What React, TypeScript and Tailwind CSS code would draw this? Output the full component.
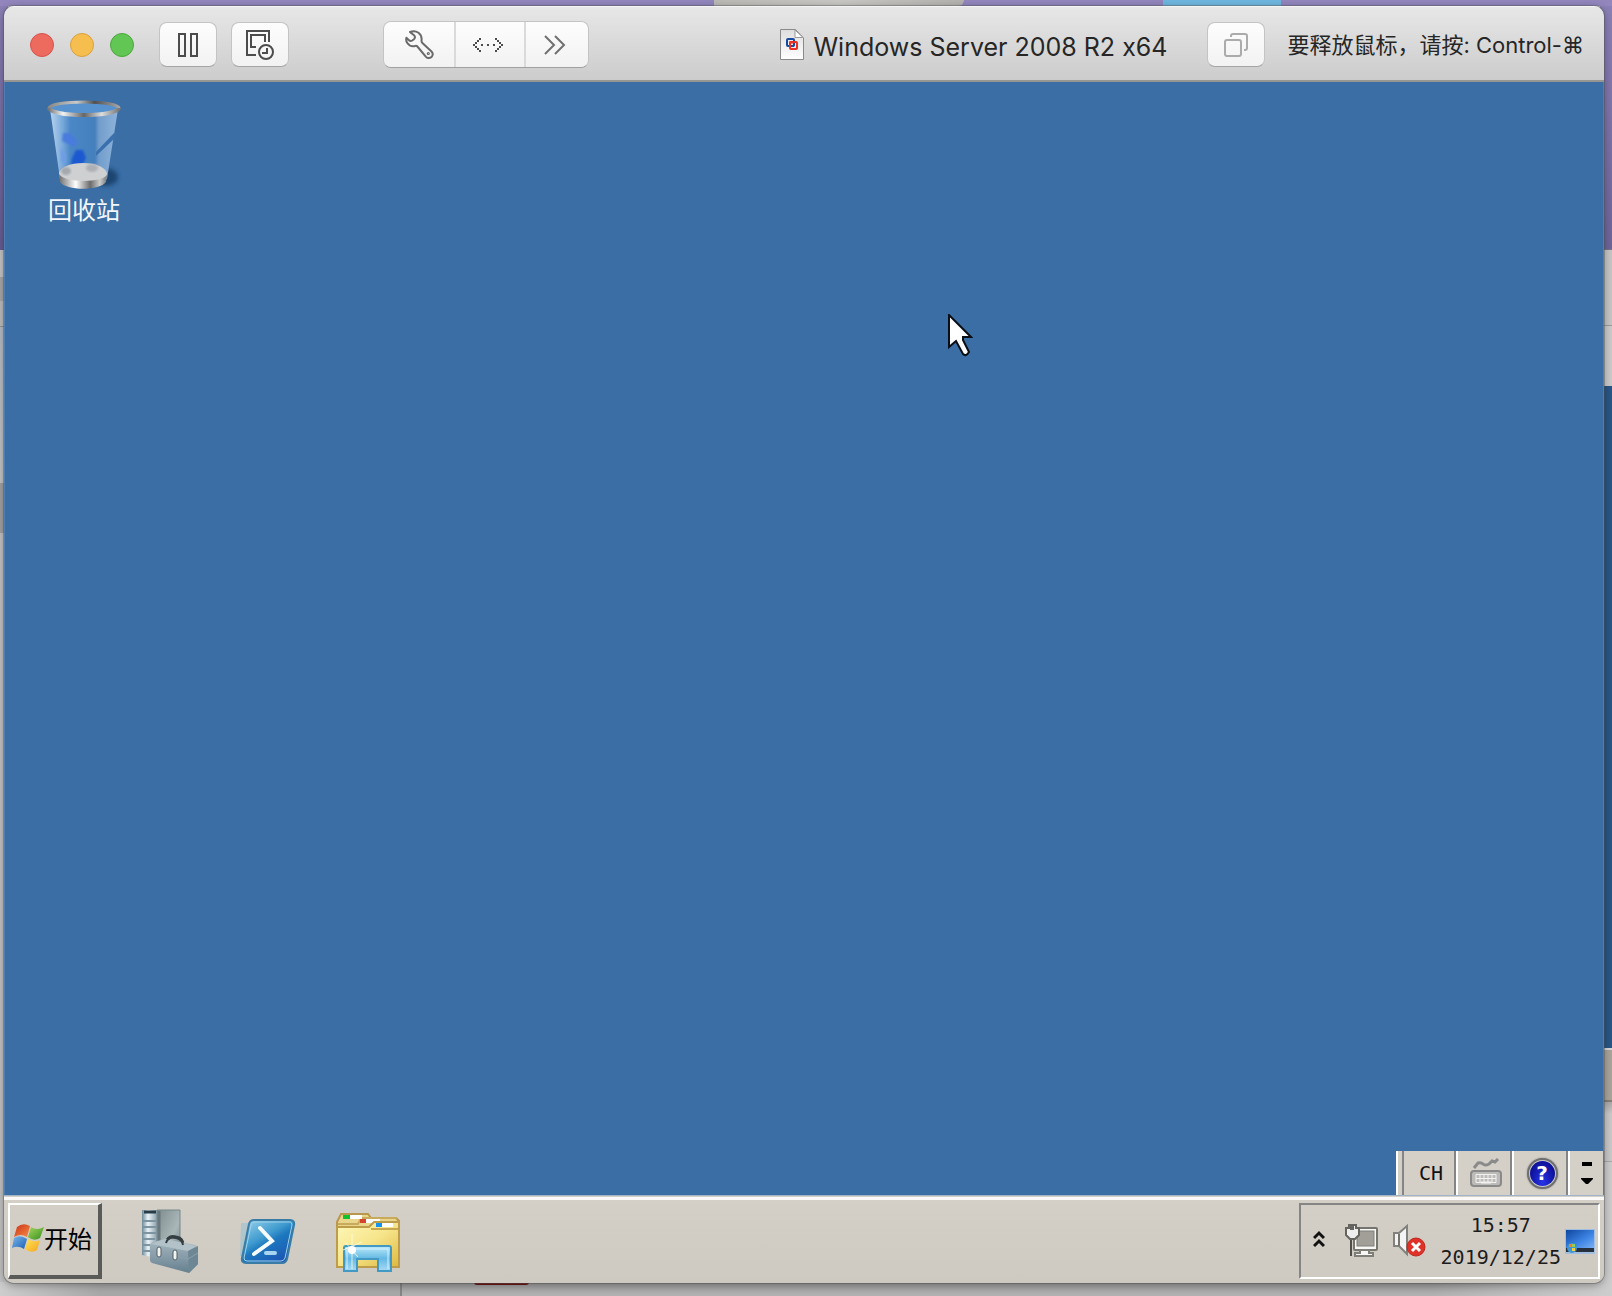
import React from "react";

const CJK = "font-[Inter,'Noto_Sans_CJK_SC',sans-serif]";
const TOOL =
  "flex h-[45px] items-center justify-center bg-linear-to-b from-[#fdfdfd] to-[#f2f2f2]";
const SINGLE =
  "w-[58px] shrink-0 rounded-lg border border-[#c4c4c4] border-b-[#a5a5a5]";

function Backdrop() {
  return (
    <div aria-hidden="true" className="absolute inset-0 flex flex-col bg-[#c9c9c9]">
      <div className="flex h-[6px] bg-[#9286bd]">
        <div className="ml-[714px] h-full w-[250px] rounded-br-full bg-linear-to-r from-[#bcbab5] via-[#c9c8c5] to-[#b5b3b0]" />
        <div className="ml-[199px] h-full w-[118px] bg-[#6fb7df]" />
      </div>
      <div className="flex flex-1 justify-between">
        <div className="flex w-2 flex-col">
          <div className="h-[244px] bg-linear-to-b from-[#8b80b5] to-[#665b93]" />
          <div className="h-[27px] bg-[#c4c4c4]" />
          <div className="h-6 bg-[#a8a8a8]" />
          <div className="h-[26px] border-b border-[#959595] bg-[#bdbdbd]" />
          <div className="h-[156px] bg-linear-to-b from-[#b5bcc4] to-[#c4c4c4]" />
          <div className="h-[50px] bg-[#a2a2a2]" />
          <div className="flex-1 bg-[#c2c2c2]" />
        </div>
        <div className="flex w-3 flex-col">
          <div className="h-[243px] bg-linear-to-b from-[#8b80b5] to-[#6d659a]" />
          <div className="h-[77px] border-t border-b border-t-[#77758a] border-b-[#9c9c9c] bg-[#c6c6c6]" />
          <div className="h-[60px] bg-[#cbcbcb]" />
          <div className="h-[662px] bg-[#295686]" />
          <div className="h-[54px] border-t-2 border-b-2 border-t-[#d9d9d9] border-b-[#858179] bg-[#aaa59c]" />
          <div className="h-[60px] border-b border-[#a9a9a9] bg-linear-to-b from-[#a9a9a9] via-[#cacaca] via-20% to-[#c9c9c9]" />
          <div className="flex-1 bg-[#cdcdcd]" />
        </div>
      </div>
      <div className="flex h-[14px] bg-linear-to-b from-[#9c9c9c] to-[#b3b3b3]">
        <div className="w-[402px] border-r-2 border-[#858585] bg-linear-to-r from-[#cdcdcd] to-[#a8a8a8] to-25%" />
        <div className="ml-[72px] h-[3px] w-[55px] rounded-b-full bg-[#701716]" />
        <div className="ml-auto w-[180px] bg-linear-to-r from-transparent to-[#cdcdcd]" />
      </div>
    </div>
  );
}

function PauseIcon() {
  return (
    <svg width="20" height="24" viewBox="0 0 20 24" fill="none" stroke="#4c4c4c" strokeWidth="2">
      <path d="M1 1h6v22H1zM13 1h6v22h-6z" />
    </svg>
  );
}

function SnapshotIcon() {
  return (
    <svg width="28" height="30" viewBox="0 0 28 30" fill="none" stroke="#4c4c4c" strokeWidth="2">
      <path d="M10 25H1V1h22v11M10 17H5V5h14v7" />
      <circle cx="20" cy="22" r="7" />
      <path d="M21 18v5h-5" />
    </svg>
  );
}

function WrenchIcon() {
  return (
    <svg width="29" height="29" viewBox="0 0 29 29" fill="none" stroke="#6a6a6a" strokeWidth="2" strokeLinejoin="round">
      <path d="M5 2C8 .7 11 1 13.500 2.800C16 4.700 17 7.300 16.500 10.500C16.400 11.800 16.600 12.300 17.400 13L26.500 21.500C28 23 28 25 26.800 26.600C25.500 28.300 22.500 28.500 21 26.800L12.800 17C12 16 11.500 15.700 10.300 15.900C7 16.600 4 15.600 2.300 13C1.200 11.300.9 9.600 1.400 7.800L4 10.200C5 11.100 6 11.200 7.200 10.500L9 9.200C10 8.300 10.100 7 9.600 6C9 4.500 7 4 5 2Z" />
      <circle cx="23.300" cy="23.500" r=".6" />
    </svg>
  );
}

function NetworkArrowsIcon() {
  return (
    <svg width="30" height="14" viewBox="0 0 30 14" fill="#4c4c4c" shapeRendering="crispEdges">
      <path d="M0 6h2v2H0zM2 4h2v2H2zM4 2h2v2H4zM6 0h2v2H6zM2 8h2v2H2zM4 10h2v2H4zM6 12h2v2H6zM8 6h2v2H8zM14 6h2v2h-2zM20 6h2v2h-2zM28 6h2v2h-2zM26 4h2v2h-2zM24 2h2v2h-2zM22 0h2v2h-2zM26 8h2v2h-2zM24 10h2v2h-2zM22 12h2v2h-2z" />
    </svg>
  );
}

function DoubleChevronIcon() {
  return (
    <svg width="22" height="20" viewBox="0 0 22 20" fill="none" stroke="#707070" strokeWidth="2">
      <path d="M1 1l9 9-9 9M11 1l9 9-9 9" />
    </svg>
  );
}

function UnityIcon() {
  return (
    <svg width="24" height="24" viewBox="0 0 24 24" fill="none" stroke="#ababab" strokeWidth="2">
      <rect x="1" y="7" width="16" height="16" rx="2" />
      <path d="M7 4V3q0-2 2-2h12q2 0 2 2v12q0 2-2 2h-1" />
    </svg>
  );
}

function DocumentIcon() {
  return (
    <svg width="24" height="31" viewBox="0 0 24 31" fill="none">
      <defs>
        <linearGradient id="doc" x2="0" y2="1">
          <stop stopColor="#dedede" />
          <stop offset="1" stopColor="#fff" />
        </linearGradient>
      </defs>
      <path d="M.5.500H15.500L23.500 9V30.500H.5Z" fill="url(#doc)" stroke="#8a8a8a" />
      <path d="M15 1V8.500H23Z" fill="#fff" stroke="#9a9a9a" />
      <rect x="7" y="10" width="7" height="7" rx="1" stroke="#174a9c" strokeWidth="2" />
      <rect x="10" y="13" width="7" height="7" rx="1" stroke="#ee2f24" strokeWidth="2" />
      <path d="M14 14v3h-3" stroke="#174a9c" strokeWidth="1" />
      <path d="M9 13.500h4" stroke="#ee2f24" strokeWidth="2" />
    </svg>
  );
}

function TitleBar() {
  return (
    <header className="flex h-[76px] items-center border-t border-b-2 border-t-[#f6f6f6] border-b-[#989692] bg-linear-to-b from-[#e7e7e7] to-[#cccccc] pt-[2px] pr-5 pl-[26px]">
      <div className="flex gap-4">
        <button aria-label="关闭" className="size-6 rounded-full border border-[#d9514a] bg-[#ed6a5f]" />
        <button aria-label="最小化" className="size-6 rounded-full border border-[#d9a13d] bg-[#f6be4f]" />
        <button aria-label="缩放" className="size-6 rounded-full border border-[#4ca73c] bg-[#62c655]" />
      </div>
      <button aria-label="暂停" className={`ml-[25px] ${TOOL} ${SINGLE}`}>
        <PauseIcon />
      </button>
      <button aria-label="快照" className={`ml-[14px] ${TOOL} ${SINGLE}`}>
        <SnapshotIcon />
      </button>
      <div className="ml-[94px] flex shrink-0 overflow-hidden rounded-lg border border-[#c4c4c4] border-b-[#a0a0a0]">
        <button aria-label="设置" className={`w-[70px] ${TOOL}`}>
          <WrenchIcon />
        </button>
        <button aria-label="网络" className={`w-[70px] border-l-2 border-[#dadada] pr-1 ${TOOL}`}>
          <NetworkArrowsIcon />
        </button>
        <button aria-label="更多" className={`w-[64px] border-l-2 border-[#dadada] pr-1 ${TOOL}`}>
          <DoubleChevronIcon />
        </button>
      </div>
      <div className="ml-auto flex items-center gap-[9px] text-[#262626]">
        <DocumentIcon />
        <h1 className="mt-1 text-[25px] leading-8 whitespace-nowrap font-[Inter,sans-serif] [font-feature-settings:'calt'_0]">
          Windows Server 2008 R2 x64
        </h1>
      </div>
      <button aria-label="Unity" className={`ml-10 ${TOOL} ${SINGLE}`}>
        <UnityIcon />
      </button>
      <p className={`ml-[22px] text-[22px] leading-8 whitespace-nowrap text-[#262626] ${CJK}`}>
        要释放鼠标，请按: Control-⌘
      </p>
    </header>
  );
}

function RecycleBinIcon() {
  return (
    <svg width="76" height="92" viewBox="0 0 76 92" fill="none">
      <defs>
        <linearGradient id="rim">
          <stop stopColor="#777" />
          <stop offset=".2" stopColor="#f2f2f2" />
          <stop offset=".5" stopColor="#666" />
          <stop offset=".75" stopColor="#ddd" />
          <stop offset="1" stopColor="#777" />
        </linearGradient>
        <linearGradient id="rimBack">
          <stop stopColor="#8a8a8a" />
          <stop offset=".4" stopColor="#c9c9c9" />
          <stop offset=".65" stopColor="#505050" />
          <stop offset="1" stopColor="#a5a5a5" />
        </linearGradient>
        <linearGradient id="glass">
          <stop stopColor="#b8d3ee" />
          <stop offset=".18" stopColor="#79aadb" />
          <stop offset=".3" stopColor="#4a87c6" />
          <stop offset=".66" stopColor="#4580bd" />
          <stop offset=".72" stopColor="#729dcb" />
          <stop offset="1" stopColor="#8fb4dc" />
        </linearGradient>
        <linearGradient id="base">
          <stop stopColor="#6d6d6d" />
          <stop offset=".35" stopColor="#fff" />
          <stop offset=".65" stopColor="#6b6b6b" />
          <stop offset=".85" stopColor="#ccc" />
          <stop offset="1" stopColor="#777" />
        </linearGradient>
        <filter id="soft" x="-30%" y="-30%" width="160%" height="160%">
          <feGaussianBlur stdDeviation="2" />
        </filter>
        <filter id="blur1"><feGaussianBlur stdDeviation=".8" /></filter>
      </defs>
      <ellipse cx="60" cy="78" rx="12" ry="9" fill="#1f4471" filter="url(#soft)" />
      <path d="M4 10L14 80Q38 96 61 80L72 10Q38 22 4 10Z" fill="url(#glass)" />
      <path d="M50 53L68 34V40L50 57Z" fill="#3a70ad" />
      <g filter="url(#blur1)">
        <path d="M17 34L24 34L32 43L29 48L16 42Z" fill="#4a7bdc" />
        <path d="M30 51L37 51L40 59L36 67L25 66L26 59Z" fill="#1e58d0" />
        <path d="M15 48L20 56L20 65L15 62Z" fill="#6e9de6" />
      </g>
      <ellipse cx="37" cy="75" rx="24" ry="11" fill="#cfd0d2" />
      <ellipse cx="46" cy="69" rx="6" ry="4" fill="#adb0b5" filter="url(#blur1)" />
      <ellipse cx="20" cy="72" rx="5" ry="4" fill="#a5a9ad" filter="url(#blur1)" />
      <path d="M13 75C18 84 56 84 61 76L60 83C54 92 20 92 14 83Z" fill="url(#base)" />
      <ellipse cx="38" cy="9" rx="34" ry="6" fill="#5792cf" />
      <path d="M3 9A35 6 0 0 1 73 9" stroke="url(#rimBack)" strokeWidth="3" />
      <path d="M3 9A35 7 0 0 0 73 9" stroke="url(#rim)" strokeWidth="4" />
    </svg>
  );
}

function PointerIcon() {
  return (
    <svg width="25" height="43" viewBox="0 0 25 43">
      <path d="M1 1V33L8 27L15 40Q18 43 21 38L15 26V23H23Z" fill="#fff" stroke="#0a0f16" strokeWidth="2" />
    </svg>
  );
}

function KeyboardIcon() {
  return (
    <svg width="34" height="30" viewBox="0 0 34 30" fill="none" stroke="#8a8a8a">
      <rect x="2" y="13" width="30" height="15" rx="3" fill="#bdbbb8" strokeWidth="2" />
      <path d="M5 10L9 5Q12 4 14 6T20 6L23 3L26 4L29 1" strokeWidth="3" />
      <path d="M7 16.500h20v8h-20zM7 20.500h20M11 16v8M15 16v8M19 16v8M23 16v8" stroke="#f1f1f1" />
      <path d="M12 24.500h10" stroke="#f1f1f1" strokeWidth="2" />
    </svg>
  );
}

function HelpIcon() {
  return (
    <span className="flex size-[31px] items-center justify-center rounded-full border-2 border-[#6f6f6f] bg-[#c9c9c9] p-px shadow-[0_0_2px_#888]">
      <span className="flex size-full items-center justify-center rounded-full bg-radial-[at_50%_85%] from-[#2734e8] to-[#04047c] text-[20px] leading-5 font-bold text-white font-['DejaVu_Sans',sans-serif]">
        ?
      </span>
    </span>
  );
}

function LanguageBar() {
  const cell = "flex items-center justify-center border-l-2 border-white";
  return (
    <div className="flex h-[44px] bg-[#d4d0c8]">
      <div className="w-2 border-r-2 border-l-2 border-r-[#858585] border-l-white" />
      <button className="w-[50px] pl-1 text-[20px] text-[#111] font-['DejaVu_Sans_Mono',monospace]">CH</button>
      <div className="w-[2px] bg-[#858585]" />
      <button aria-label="键盘" className={`${cell} w-[54px] pl-1`}>
        <KeyboardIcon />
      </button>
      <div className="w-[2px] bg-[#858585]" />
      <button aria-label="帮助" className={`${cell} w-[54px] pl-1`}>
        <HelpIcon />
      </button>
      <div className="w-[2px] bg-[#858585]" />
      <button aria-label="选项" className={`${cell} w-[35px]`}>
        <svg width="12" height="24" viewBox="0 0 12 24">
          <path d="M1 1h10v4H1zM0 17h12v1l-5 5h-2l-5-5z" fill="#000" />
        </svg>
      </button>
    </div>
  );
}

function Desktop() {
  return (
    <main className="relative flex flex-1 flex-col items-start justify-between border-x border-[#4f7fb2] bg-[#3a6ea5]">
      <button className="mt-[17px] ml-[33px] flex w-[92px] flex-col items-center">
        <RecycleBinIcon />
        <span className="mt-1 text-[24px] leading-7 text-[#f2f6fa] font-['Noto_Sans_CJK_SC',sans-serif]">
          回收站
        </span>
      </button>
      <div className="absolute top-[232px] left-[943px]">
        <PointerIcon />
      </div>
      <div className="self-end">
        <LanguageBar />
      </div>
    </main>
  );
}

function WindowsFlag() {
  return (
    <svg width="32" height="30" viewBox="0 0 32 30">
      <defs>
        <linearGradient id="fr" x2="1" y2="1"><stop stopColor="#c93216" /><stop offset="1" stopColor="#f88b46" /></linearGradient>
        <linearGradient id="fg" x2="1" y2="1"><stop stopColor="#a6d65c" /><stop offset="1" stopColor="#348e20" /></linearGradient>
        <linearGradient id="fb" x2="1" y2="1"><stop stopColor="#7bb8ea" /><stop offset="1" stopColor="#1c5eb5" /></linearGradient>
        <linearGradient id="fy" x2="1" y2="1"><stop stopColor="#ffe35a" /><stop offset="1" stopColor="#f3a51d" /></linearGradient>
      </defs>
      <path d="M5 4Q11-1 18 3L15 14Q9 10 2 14Z" fill="url(#fr)" />
      <path d="M19 4Q25 8 32 4L28 15Q22 19 16 14Z" fill="url(#fg)" />
      <path d="M2 15Q8 11 15 16L12 26Q6 22 0 25Z" fill="url(#fb)" />
      <path d="M16 16Q22 20 28 17L25 27Q19 31 13 26Z" fill="url(#fy)" />
    </svg>
  );
}

function ServerManagerIcon() {
  return (
    <svg width="58" height="66" viewBox="0 0 58 66" fill="none">
      <defs>
        <linearGradient id="sv" x2="1" y2="1"><stop stopColor="#7f8b8d" /><stop offset=".6" stopColor="#aab7b8" /><stop offset="1" stopColor="#6f7f85" /></linearGradient>
        <linearGradient id="tb" x2="0" y2="1"><stop stopColor="#a9bac3" /><stop offset="1" stopColor="#66808f" /></linearGradient>
        <linearGradient id="sf"><stop stopColor="#6d8998" /><stop offset=".4" stopColor="#eaf3f8" /><stop offset="1" stopColor="#8ba0ab" /></linearGradient>
      </defs>
      <path d="M1 1H16V49L1 46Z" fill="url(#sf)" />
      <path d="M16 1H39V46L16 48Z" fill="url(#sv)" stroke="#76878b" />
      <path d="M18 2V46" stroke="#66777d" strokeWidth="3" />
      <path d="M3 3h12" stroke="#263c49" strokeWidth="3" />
      <path d="M2 12h13M2 18h13M2 24h13M1 30h13M1 36h8M1 42h8" stroke="#7c93a0" strokeWidth="2" />
      <path d="M25 34Q27 26 35 28Q42 29 42 36" stroke="#353f43" strokeWidth="3" />
      <path d="M9 36Q9 34 12 33L24 30L54 36Q57 37 57 40V55L48 64L11 54Q9 53 9 51Z" fill="url(#tb)" />
      <path d="M10 35L24 30L56 37L47 42Z" fill="#b3c1c8" />
      <path d="M47 42L57 37V55L48 64Z" fill="#6e8795" />
      <path d="M9 42L47 50L57 44" stroke="#8ca1ac" />
      <path d="M25 34Q27 27 35 29Q41 30 42 36" stroke="#353f43" strokeWidth="2" />
      <rect x="16" y="38" width="4" height="10" rx="2" fill="#f3f3ed" stroke="#506069" />
      <rect x="32" y="41" width="4" height="10" rx="2" fill="#f3f3ed" stroke="#506069" />
    </svg>
  );
}

function PowerShellIcon() {
  return (
    <svg width="58" height="48" viewBox="0 0 58 48" fill="none">
      <defs>
        <linearGradient id="ps" x2=".7" y2="1">
          <stop stopColor="#9ed6ee" />
          <stop offset=".45" stopColor="#3f9bcf" />
          <stop offset=".6" stopColor="#1d78be" />
          <stop offset="1" stopColor="#1c56b4" />
        </linearGradient>
      </defs>
      <path d="M3 5h8L5 38H2Z" fill="#7fb9d6" opacity=".4" />
      <path d="M16 2H52Q57 2 56 7L49 41Q48 45 44 45H8Q3 45 4 40L11 6Q12 2 16 2Z" fill="url(#ps)" stroke="#397ca6" strokeWidth="2" />
      <path d="M16 4H52Q54 4 54 7L47 40Q46 43 43 43H9Q6 43 6 40L13 7Q14 4 16 4Z" stroke="#9ed1ea" />
      <path d="M22 10L34 23L16 36" stroke="#f5fbff" strokeWidth="4" strokeLinecap="round" />
      <path d="M28 35H37" stroke="#a9d4f0" strokeWidth="4" strokeLinecap="round" />
    </svg>
  );
}

function ExplorerIcon() {
  return (
    <svg width="66" height="60" viewBox="0 0 66 60" fill="none">
      <defs>
        <linearGradient id="fo" x2="1" y2="1"><stop stopColor="#fdf7b9" /><stop offset=".5" stopColor="#f6e58b" /><stop offset="1" stopColor="#ddb840" /></linearGradient>
        <linearGradient id="st" x2="0" y2="1"><stop stopColor="#bfeafa" /><stop offset=".5" stopColor="#63b8e4" /><stop offset="1" stopColor="#a9daf5" /></linearGradient>
      </defs>
      <path d="M2 55V10L6 2H33L36 6H61L64 9V55Z" fill="#ead68b" stroke="#b9984e" strokeWidth="2" />
      <path d="M3 12H23L26 6H62" stroke="#c7aa5c" strokeWidth="2" />
      <rect x="8" y="3" width="7" height="4" fill="#11c32b" />
      <rect x="15" y="3" width="12" height="4" fill="#fff" />
      <rect x="25" y="7" width="6" height="4" fill="#d5432b" />
      <rect x="31" y="7" width="14" height="4" fill="#fff" />
      <path d="M2 55V15H34L39 10H64V55Z" fill="url(#fo)" stroke="#bd9c4a" strokeWidth="2" />
      <path d="M36 17H63" stroke="#c7a650" strokeWidth="2" />
      <rect x="41" y="11" width="6" height="4" fill="#1593ef" />
      <rect x="47" y="11" width="11" height="4" fill="#fff" />
      <path d="M9 59V36Q9 34 11 34H54Q56 34 56 36V59H43V47H22V59Z" fill="url(#st)" stroke="#4299c4" strokeWidth="2" />
      <path d="M12 57V37H53V57" stroke="#d4f2fd" />
      <path d="M17 22V57M8 38L27 30M10 30L23 45" stroke="#fffde1" opacity=".8" />
      <circle cx="17" cy="38" r="4" fill="#fff" />
    </svg>
  );
}

function NetworkTrayIcon() {
  return (
    <svg width="34" height="34" viewBox="0 0 34 34" fill="none">
      <rect x="9" y="4" width="23" height="22" rx="1" fill="#f7f7f5" stroke="#77756f" strokeWidth="2" />
      <rect x="12" y="7" width="17" height="15" fill="#a19f98" stroke="#807e78" />
      <path d="M15 26h9v3h4v3H10v-3h5z" fill="#f7f7f5" stroke="#807e78" strokeWidth="2" />
      <path d="M6 14V32" stroke="#4f4e4b" strokeWidth="2" />
      <path d="M1 4H4V1H6V5H8V1H11V4H14V11L10 15H5L1 11Z" fill="#eee" stroke="#66645f" strokeWidth="2" />
    </svg>
  );
}

function VolumeTrayIcon() {
  return (
    <svg width="34" height="34" viewBox="0 0 34 34" fill="none">
      <path d="M1 9H6L14 2V30L6 22H1Z" fill="#f4f4f4" stroke="#82817e" strokeWidth="2" />
      <path d="M6 10V22" stroke="#77746e" strokeWidth="2" />
      <circle cx="23" cy="23" r="9" fill="#df3127" stroke="#bd2720" />
      <path d="M19 19l8 8M27 19l-8 8" stroke="#fff" strokeWidth="3" />
    </svg>
  );
}

function ShowDesktopIcon() {
  return (
    <svg width="30" height="25" viewBox="0 0 30 25">
      <defs>
        <linearGradient id="sd" x2="1" y2="1"><stop stopColor="#0e469f" /><stop offset=".6" stopColor="#3f86e6" /><stop offset="1" stopColor="#79b0f5" /></linearGradient>
      </defs>
      <rect width="30" height="25" fill="#a3bedf" />
      <rect x="1" y="1" width="28" height="18" fill="url(#sd)" />
      <rect x="1" y="19" width="28" height="4" fill="#26313d" />
      <circle cx="7" cy="19" r="5" fill="#3e96d2" />
      <path d="M4 15h3v3H4z" fill="#ed7e3e" />
      <path d="M7 15h3v3H7z" fill="#8ed054" />
      <path d="M7 19h3v3H7z" fill="#f5cf43" />
    </svg>
  );
}

function Taskbar() {
  return (
    <footer className="flex h-[88px] items-start border-t border-[#9fb4c9] bg-linear-to-b from-[#d4d0c8] to-[#cec9c1] shadow-[inset_0_1px_0_#d4d0c8,inset_0_4px_0_#faf9f7]">
      <button className="mt-[7px] ml-1 flex h-[76px] w-[94px] items-center border-t-2 border-r-4 border-b-4 border-l-2 border-t-white border-r-[#5a5a58] border-b-[#5a5a58] border-l-white pb-1 pl-[2px] text-[24px] leading-7 text-black font-['Noto_Sans_CJK_SC',sans-serif]">
        <WindowsFlag />
        <span className="whitespace-nowrap">开始</span>
      </button>
      <nav aria-label="快速启动" className="mt-2 ml-[39px] flex h-[76px] items-center gap-[39px]">
        <button aria-label="服务器管理器"><ServerManagerIcon /></button>
        <button aria-label="PowerShell"><PowerShellIcon /></button>
        <button aria-label="资源管理器"><ExplorerIcon /></button>
      </nav>
      <div className="mt-[7px] mr-1 ml-auto flex h-[76px] items-center border-2 border-t-[#858585] border-r-white border-b-white border-l-[#858585] pr-[3px] pl-3">
        <button aria-label="显示隐藏的图标" className="mb-1">
          <svg width="12" height="18" viewBox="0 0 12 18" fill="none" stroke="#111" strokeWidth="3">
            <path d="M1 8l5-5 5 5M1 16l5-5 5 5" />
          </svg>
        </button>
        <button aria-label="网络状态" className="ml-5"><NetworkTrayIcon /></button>
        <button aria-label="音量" className="ml-[14px]"><VolumeTrayIcon /></button>
        <time dateTime="2019-12-25T15:57" className="ml-[14px] text-center text-[20px] leading-8 text-[#1c1c1c] font-['DejaVu_Sans_Mono',monospace]">
          <span className="block">15:57</span>
          <span className="block">2019/12/25</span>
        </time>
        <button aria-label="显示桌面" className="ml-1"><ShowDesktopIcon /></button>
      </div>
    </footer>
  );
}

export default function App() {
  return (
    <div className="relative flex min-h-screen flex-col pt-[6px] pr-2 pb-[13px] pl-1">
      <Backdrop />
      <div className="relative flex flex-1 flex-col overflow-hidden rounded-[10px] shadow-[0_0_0_1px_rgba(80,80,80,0.4),0_2px_8px_rgba(0,0,0,0.35)]">
        <TitleBar />
        <Desktop />
        <Taskbar />
      </div>
    </div>
  );
}
